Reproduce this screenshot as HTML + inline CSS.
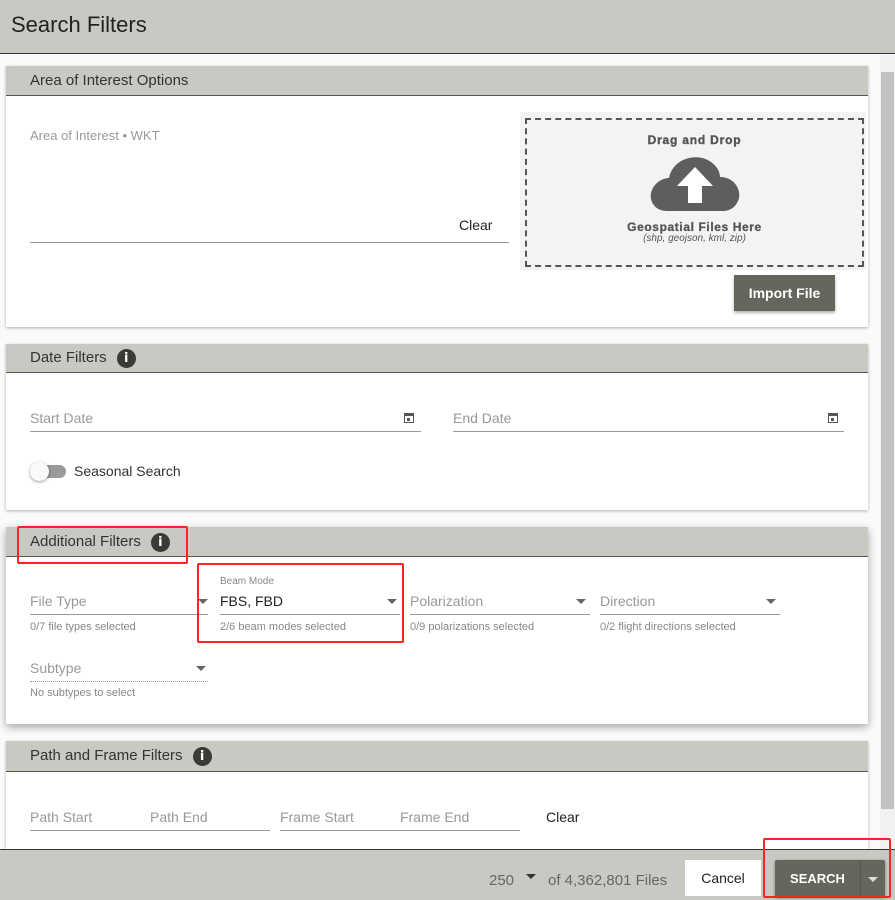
<!DOCTYPE html>
<html><head><meta charset="utf-8"><style>
*{box-sizing:border-box;margin:0;padding:0}
body{width:895px;height:900px;overflow:hidden;background:#fafafa;font-family:"Liberation Sans",Roboto,sans-serif;position:relative;color:#333}
.a{position:absolute}
.card{position:absolute;left:6px;width:862px;background:#fff;box-shadow:0 1px 3px rgba(0,0,0,.3)}
.hd{position:absolute;left:0;top:0;width:100%;background:#c9c9c3;border-bottom:1px solid #555;font-size:15px;color:#333;padding-left:24px}
.info{display:inline-block;width:19px;height:19px;border-radius:50%;background:#3a3a36;color:#fff;font-size:13px;font-weight:bold;text-align:center;line-height:19px;vertical-align:middle;margin-left:10px;font-family:"DejaVu Sans",sans-serif}
.ph{color:#999;font-size:14px}
.line{border-bottom:1px solid #999}
.sm{font-size:11px;color:#888}
.tri{width:0;height:0;border-left:5px solid transparent;border-right:5px solid transparent;border-top:5px solid #666}
.red{position:absolute;border:2px solid #f22;border-radius:2px}
.cal{position:absolute;width:10px;height:10px;border:1.5px solid #555;border-top-width:3px}
.cal:after{content:"";position:absolute;left:2px;top:2px;width:3px;height:3px;background:#555}
</style></head><body>
<div class="a" style="left:0;top:0;width:895px;height:54px;background:#c9c9c3;border-bottom:1px solid #333"></div>
<div class="a" style="left:11px;top:12px;font-size:22px;color:#222">Search Filters</div>
<div class="a" style="left:880px;top:55px;width:15px;height:795px;background:#f1f1f1"></div>
<div class="a" style="left:881px;top:72px;width:13px;height:737px;background:#c1c1c1"></div>

<div class="card" style="top:66px;height:261px">
 <div class="hd" style="height:30px;line-height:29px">Area of Interest Options</div>
 <div class="a ph" style="left:24px;top:62px;font-size:13px">Area of Interest • WKT</div>
 <div class="a line" style="left:24px;top:176px;width:479px"></div>
 <div class="a" style="left:453px;top:151px;font-size:14px;color:#222">Clear</div>
 <div class="a" style="left:514px;top:46px;width:346px;height:158px;background:#f3f3f3"></div>
 <div class="a" style="left:519px;top:52px;width:339px;height:149px;border:2px dashed #555"></div>
 <div class="a" style="left:519px;top:67px;width:339px;text-align:center;font-size:12px;font-weight:bold;color:#555;letter-spacing:.8px;-webkit-text-stroke:.4px #555">Drag and Drop</div>
 <svg class="a" style="left:643px;top:86px" width="92" height="60" viewBox="0 0 92 60"><path d="M18 59 C4 59 -1 46 3 38 C7 29 15 26 20 26 C24 6 48 0 62 10 C69 15 71 21 71 25 C84 25 92 36 90 46 C88 54 82 59 74 59 Z" fill="#5e5e5e"/><path d="M46 15 L64 34 L53 34 L53 51 L39 51 L39 34 L28 34 Z" fill="#fff"/></svg>
 <div class="a" style="left:519px;top:154px;width:339px;text-align:center;font-size:12px;font-weight:bold;color:#555;letter-spacing:.6px;-webkit-text-stroke:.3px #555">Geospatial Files Here</div>
 <div class="a" style="left:519px;top:167px;width:339px;text-align:center;font-size:10px;font-style:italic;color:#555">(shp, geojson, kml, zip)</div>
 <div class="a" style="left:728px;top:209px;width:101px;height:36px;background:#66665c;color:#fff;font-size:14px;font-weight:bold;text-align:center;line-height:36px;box-shadow:0 2px 3px rgba(0,0,0,.3)">Import File</div>
</div>

<div class="card" style="top:344px;height:166px">
 <div class="hd" style="height:29px;line-height:28px">Date Filters<span class="info">i</span></div>
 <div class="a ph" style="left:24px;top:66px">Start Date</div>
 <div class="a line" style="left:24px;top:87px;width:391px"></div>
 <div class="cal" style="left:398px;top:69px"></div>
 <div class="a ph" style="left:447px;top:66px">End Date</div>
 <div class="a line" style="left:447px;top:87px;width:391px"></div>
 <div class="cal" style="left:822px;top:69px"></div>
 <div class="a" style="left:30px;top:121px;width:30px;height:13px;border-radius:7px;background:#9a9a9a"></div>
 <div class="a" style="left:24px;top:118px;width:19px;height:19px;border-radius:50%;background:#fafafa;box-shadow:0 1px 3px rgba(0,0,0,.4)"></div>
 <div class="a" style="left:68px;top:119px;font-size:14px;color:#333">Seasonal Search</div>
</div>

<div class="card" style="top:527px;height:197px;box-shadow:0 3px 8px rgba(0,0,0,.35)">
 <div class="hd" style="height:30px;line-height:29px">Additional Filters<span class="info">i</span></div>
 <div class="a ph" style="left:24px;top:66px">File Type</div>
 <div class="tri a" style="left:192px;top:72px"></div>
 <div class="a line" style="left:24px;top:87px;width:178px"></div>
 <div class="a sm" style="left:24px;top:94px">0/7 file types selected</div>
 <div class="a" style="left:214px;top:49px;font-size:10px;color:#888">Beam Mode</div>
 <div class="a" style="left:214px;top:66px;font-size:14px;color:#222">FBS, FBD</div>
 <div class="tri a" style="left:381px;top:72px"></div>
 <div class="a line" style="left:214px;top:87px;width:180px"></div>
 <div class="a sm" style="left:214px;top:94px">2/6 beam modes selected</div>
 <div class="a ph" style="left:404px;top:66px">Polarization</div>
 <div class="tri a" style="left:570px;top:72px"></div>
 <div class="a line" style="left:404px;top:87px;width:180px"></div>
 <div class="a sm" style="left:404px;top:94px">0/9 polarizations selected</div>
 <div class="a ph" style="left:594px;top:66px">Direction</div>
 <div class="tri a" style="left:760px;top:72px"></div>
 <div class="a line" style="left:594px;top:87px;width:180px"></div>
 <div class="a sm" style="left:594px;top:94px">0/2 flight directions selected</div>
 <div class="a ph" style="left:24px;top:133px">Subtype</div>
 <div class="tri a" style="left:190px;top:139px"></div>
 <div class="a" style="left:24px;top:154px;width:178px;border-bottom:1px dotted #999"></div>
 <div class="a sm" style="left:24px;top:160px">No subtypes to select</div>
</div>

<div class="card" style="top:741px;height:120px">
 <div class="hd" style="height:31px;line-height:30px">Path and Frame Filters<span class="info">i</span></div>
 <div class="a ph" style="left:24px;top:68px">Path Start</div>
 <div class="a ph" style="left:144px;top:68px">Path End</div>
 <div class="a line" style="left:24px;top:89px;width:240px"></div>
 <div class="a ph" style="left:274px;top:68px">Frame Start</div>
 <div class="a ph" style="left:394px;top:68px">Frame End</div>
 <div class="a line" style="left:274px;top:89px;width:240px"></div>
 <div class="a" style="left:540px;top:68px;font-size:14px;color:#222">Clear</div>
</div>

<div class="a" style="left:0;top:849px;width:895px;height:51px;background:#c9c9c3;border-top:1px solid #333"></div>
<div class="a" style="left:489px;top:872px;font-size:15px;color:#666">250</div>
<div class="tri a" style="left:526px;top:874px;border-top-color:#333"></div>
<div class="a" style="left:548px;top:872px;font-size:15px;color:#666">of 4,362,801 Files</div>
<div class="a" style="left:685px;top:860px;width:76px;height:36px;background:#fff;text-align:center;line-height:36px;font-size:14px;color:#222">Cancel</div>
<div class="a" style="left:775px;top:860px;width:110px;height:37px;background:#66665c;border-radius:2px;box-shadow:0 1px 3px rgba(0,0,0,.4)"></div>
<div class="a" style="left:775px;top:860px;width:85px;height:37px;line-height:37px;text-align:center;color:#fff;font-size:13px;font-weight:bold">SEARCH</div>
<div class="a" style="left:860px;top:860px;width:1px;height:37px;background:#555"></div>
<div class="tri a" style="left:868px;top:877px;border-top-color:#ddd"></div>

<div class="red" style="left:17px;top:526px;width:171px;height:38px"></div>
<div class="red" style="left:197px;top:563px;width:207px;height:80px"></div>
<div class="red" style="left:763px;top:838px;width:128px;height:60px"></div>
</body></html>
